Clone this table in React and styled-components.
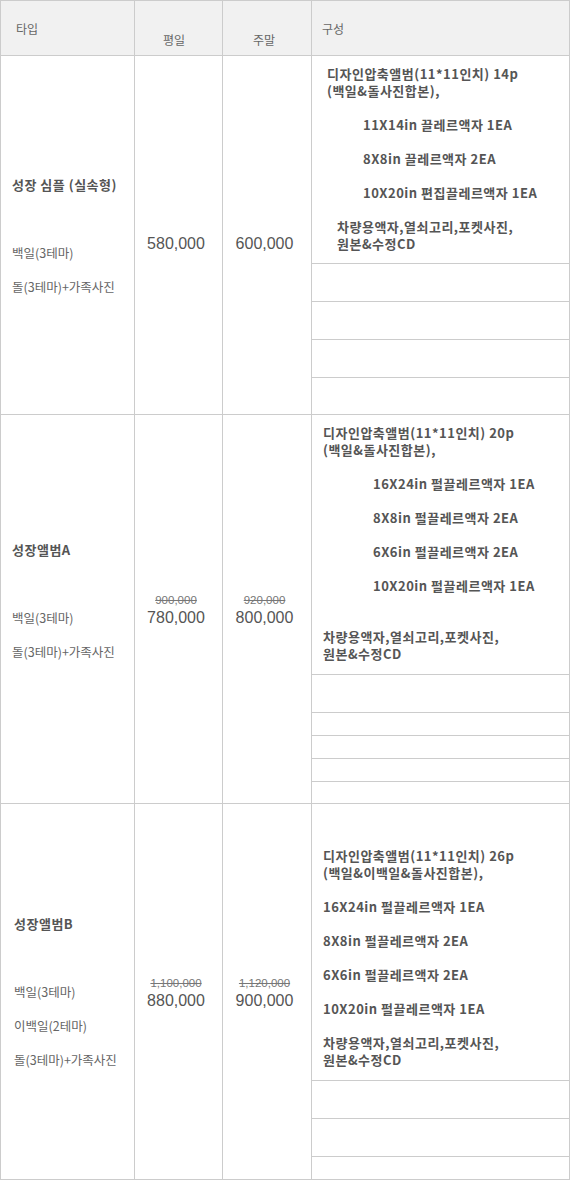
import React from 'react';
import styled, { createGlobalStyle } from 'styled-components';

const GlobalStyle = createGlobalStyle`
  html, body { margin: 0; padding: 0; background: #fff; }
  body { font-family: "Noto Sans CJK KR", "Noto Sans", sans-serif; }
  * { box-sizing: border-box; }
`;

const BORDER = '#cccccc';
const LH = 17;

const Table = styled.div`
  width: 570px;
  border-top: 1px solid ${BORDER};
  border-left: 1px solid ${BORDER};
`;

const Section = styled.div`
  display: grid;
  grid-template-columns: 134px 88px 89px 258px;
  grid-template-rows: ${(p) => p.$rows.map((r) => `${r}px`).join(' ')};
`;

const HeadCell = styled.div`
  height: 55px;
  background: #f1f1f1;
  border-right: 1px solid ${BORDER};
  border-bottom: 1px solid ${BORDER};
  display: flex;
  align-items: center;
  padding: ${(p) => p.$top || 0}px 0 0 ${(p) => p.$pl}px;
  font-size: 12px;
  line-height: ${LH}px;
  color: #666;
`;

const Cell = styled.div`
  border-right: 1px solid ${BORDER};
  border-bottom: 1px solid ${BORDER};
`;

const SpanCell = styled(Cell)`
  grid-row: 1 / -1;
  grid-column: ${(p) => p.$col};
  display: flex;
  flex-direction: column;
  justify-content: center;
`;

const TypeCell = styled(SpanCell)`
  padding: 0 0 ${(p) => p.$pb || 0}px ${(p) => p.$pl}px;
`;

const PriceCell = styled(SpanCell)`
  align-items: center;
  padding-right: 5px;
`;

const DetailCell = styled(Cell)`
  grid-column: 4;
  padding: 9px 0 0 11px;
`;

const EmptyCell = styled(Cell)`
  grid-column: 4;
`;

const TypeTitle = styled.div`
  font-size: 13px;
  font-weight: 700;
  letter-spacing: 0.5px;
  line-height: ${LH}px;
  color: #555;
  white-space: nowrap;
`;

const TypeLine = styled.div`
  margin-top: ${(p) => (p.$space || 0) * LH}px;
  font-size: 12.5px;
  line-height: ${LH}px;
  color: #666;
  white-space: nowrap;
`;

const OldPrice = styled.div`
  height: ${LH}px;
  font-family: "Liberation Sans", Arial, sans-serif;
  font-size: 11.5px;
  line-height: ${LH}px;
  color: #777;
  text-decoration: line-through;
`;

const Price = styled.div`
  font-family: "Liberation Sans", Arial, sans-serif;
  font-size: 16px;
  line-height: ${LH}px;
  color: #555;
`;

const DetailLine = styled.div`
  margin-top: ${(p) => (p.$space || 0) * LH}px;
  padding-left: ${(p) => p.$indent || 0}px;
  font-size: 13px;
  font-weight: 700;
  letter-spacing: 0.5px;
  line-height: ${LH}px;
  color: #555;
  white-space: nowrap;
`;

const sections = [
  {
    rows: [208, 38, 38, 38, 37],
    typePl: 11,
    typePb: 0,
    title: '성장 심플 (실속형)',
    typeLines: [
      { t: '백일(3테마)', s: 3 },
      { t: '돌(3테마)+가족사진', s: 1 },
    ],
    weekday: { old: '', now: '580,000' },
    weekend: { old: '', now: '600,000' },
    details: [
      { t: '디자인압축앨범(11*11인치) 14p', i: 4 },
      { t: '(백일&돌사진합본),', i: 4 },
      { t: '11X14in 끌레르액자 1EA', i: 40, s: 1 },
      { t: '8X8in 끌레르액자 2EA', i: 40, s: 1 },
      { t: '10X20in 편집끌레르액자 1EA', i: 40, s: 1 },
      { t: '차량용액자,열쇠고리,포켓사진,', i: 14, s: 1 },
      { t: '원본&수정CD', i: 14 },
    ],
  },
  {
    rows: [260, 38, 23, 23, 23, 22],
    typePl: 11,
    typePb: LH,
    title: '성장앨범A',
    typeLines: [
      { t: '백일(3테마)', s: 3 },
      { t: '돌(3테마)+가족사진', s: 1 },
    ],
    weekday: { old: '900,000', now: '780,000' },
    weekend: { old: '920,000', now: '800,000' },
    details: [
      { t: '디자인압축앨범(11*11인치) 20p' },
      { t: '(백일&돌사진합본),' },
      { t: '16X24in 펄끌레르액자 1EA', i: 50, s: 1 },
      { t: '8X8in 펄끌레르액자 2EA', i: 50, s: 1 },
      { t: '6X6in 펄끌레르액자 2EA', i: 50, s: 1 },
      { t: '10X20in 펄끌레르액자 1EA', i: 50, s: 1 },
      { t: '차량용액자,열쇠고리,포켓사진,', s: 2 },
      { t: '원본&수정CD' },
    ],
  },
  {
    rows: [277, 38, 38, 23],
    typePl: 13,
    typePb: 0,
    title: '성장앨범B',
    typeLines: [
      { t: '백일(3테마)', s: 3 },
      { t: '이백일(2테마)', s: 1 },
      { t: '돌(3테마)+가족사진', s: 1 },
    ],
    weekday: { old: '1,100,000', now: '880,000' },
    weekend: { old: '1,120,000', now: '900,000' },
    details: [
      { t: '디자인압축앨범(11*11인치) 26p', s: 2 },
      { t: '(백일&이백일&돌사진합본),' },
      { t: '16X24in 펄끌레르액자 1EA', s: 1 },
      { t: '8X8in 펄끌레르액자 2EA', s: 1 },
      { t: '6X6in 펄끌레르액자 2EA', s: 1 },
      { t: '10X20in 펄끌레르액자 1EA', s: 1 },
      { t: '차량용액자,열쇠고리,포켓사진,', s: 1 },
      { t: '원본&수정CD' },
    ],
  },
];

function PriceBlock({ col, price }) {
  return (
    <PriceCell $col={col}>
      <OldPrice>{price.old}</OldPrice>
      <Price>{price.now}</Price>
    </PriceCell>
  );
}

export default function App() {
  return (
    <>
      <GlobalStyle />
      <Table>
        <Section $rows={[55]}>
          <HeadCell $pl={15}>타입</HeadCell>
          <HeadCell $pl={28} $top={23}>평일</HeadCell>
          <HeadCell $pl={30} $top={23}>주말</HeadCell>
          <HeadCell $pl={10}>구성</HeadCell>
        </Section>
        {sections.map((sec, si) => (
          <Section key={si} $rows={sec.rows}>
            <TypeCell $col={1} $pl={sec.typePl} $pb={sec.typePb}>
              <TypeTitle>{sec.title}</TypeTitle>
              {sec.typeLines.map((l, i) => (
                <TypeLine key={i} $space={l.s}>{l.t}</TypeLine>
              ))}
            </TypeCell>
            <PriceBlock col={2} price={sec.weekday} />
            <PriceBlock col={3} price={sec.weekend} />
            <DetailCell>
              {sec.details.map((l, i) => (
                <DetailLine key={i} $space={l.s} $indent={l.i}>{l.t}</DetailLine>
              ))}
            </DetailCell>
            {sec.rows.slice(1).map((_, i) => (
              <EmptyCell key={i} />
            ))}
          </Section>
        ))}
      </Table>
    </>
  );
}
